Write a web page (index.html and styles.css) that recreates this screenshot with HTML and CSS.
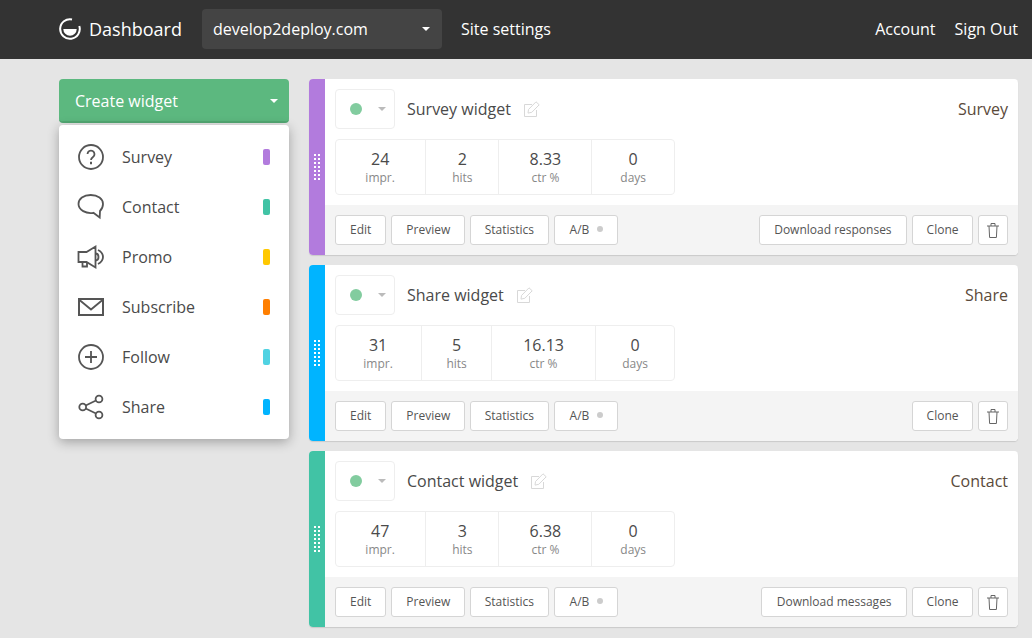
FILE: index.html
```html
<!DOCTYPE html>
<html lang="en">
<head>
    <meta charset="UTF-8">
    <title>Dashboard</title>
    <link rel="stylesheet" href="styles.css">
</head>
<body>
    <header class="topbar">
        <div class="brand">
            <svg class="logo" width="22" height="22" viewBox="0 0 22 22">
                <path d="M20.300 8A9.800 9.800 0 1 1 13 1.400" fill="none" stroke="#fff" stroke-width="2"/>
                <path d="M4.300 11h13.400a6.700 6.700 0 0 1-13.400 0z" fill="#fff"/>
            </svg>
            <span>Dashboard</span>
        </div>
        <div class="site-select">
            <span>develop2deploy.com</span>
            <i class="caret"></i>
        </div>
        <a class="nav-link">Site settings</a>
        <nav class="user-nav">
            <a class="nav-link">Account</a>
            <a class="nav-link">Sign Out</a>
        </nav>
    </header>

    <main class="page">
        <aside class="sidebar">
            <button class="create-btn">Create widget <i class="caret"></i></button>
            <ul class="type-menu">
                <li>
                    <svg class="type-icon" width="28" height="28" viewBox="0 0 28 28" fill="none" stroke="#555" stroke-width="1.800">
                        <circle cx="14" cy="14" r="12"/>
                        <path d="M10.500 11a3.500 3.500 0 1 1 5.500 3c-1.300.9-2 1.500-2 3"/>
                        <path d="M14 18.800v2.400" stroke-width="2"/>
                    </svg>
                    <span>Survey</span><i class="swatch survey"></i>
                </li>
                <li>
                    <svg class="type-icon" width="28" height="28" viewBox="0 0 28 28" fill="none" stroke="#555" stroke-width="1.800">
                        <path d="M13.700 2C20.800 2 26 5.800 26 11c0 3.400-1.800 5.800-3 7l-.3 6.500-6.300-4.700C9 21 1.500 17 1.500 11 1.500 5.800 6.500 2 13.700 2z"/>
                    </svg>
                    <span>Contact</span><i class="swatch contact"></i>
                </li>
                <li>
                    <svg class="type-icon" width="28" height="28" viewBox="0 0 28 28" fill="none" stroke="#555" stroke-width="1.800">
                        <path d="M1.500 9h8L18.500 3.500v21L9.500 19h-8z"/>
                        <path d="M5.500 19v4.500h4.500V20"/>
                        <path d="M18.500 10.500c2 0 3 1.500 3 3.500s-1 3.500-3 3.500"/>
                        <path d="M21 7c3 1.500 5 3.500 5 7s-2 5.500-5 7"/>
                    </svg>
                    <span>Promo</span><i class="swatch promo"></i>
                </li>
                <li>
                    <svg class="type-icon" width="28" height="28" viewBox="0 0 28 28" fill="none" stroke="#555" stroke-width="1.800">
                        <rect x="2" y="6" width="24" height="16" stroke-width="2"/>
                        <path d="M2.500 7L14 16.500 25.500 7"/>
                    </svg>
                    <span>Subscribe</span><i class="swatch subscribe"></i>
                </li>
                <li>
                    <svg class="type-icon" width="28" height="28" viewBox="0 0 28 28" fill="none" stroke="#555" stroke-width="1.800">
                        <circle cx="14" cy="14" r="12"/>
                        <path d="M14 8v12M8 14h12"/>
                    </svg>
                    <span>Follow</span><i class="swatch follow"></i>
                </li>
                <li>
                    <svg class="type-icon" width="28" height="28" viewBox="0 0 28 28" fill="none" stroke="#555" stroke-width="1.800">
                        <circle cx="22" cy="6" r="3.400"/>
                        <circle cx="5.700" cy="14" r="3.400"/>
                        <circle cx="22" cy="22" r="3.400"/>
                        <path d="M8.700 12.500L19 7.500M8.700 15.500L19 20.500"/>
                    </svg>
                    <span>Share</span><i class="swatch share"></i>
                </li>
            </ul>
        </aside>

        <section class="widgets">
            <article class="widget">
                <div class="handle survey"><i class="grip"></i></div>
                <div class="widget-main">
                    <div class="widget-body">
                        <div class="widget-head">
                            <div class="status-btn"><i class="dot"></i><i class="caret grey"></i></div>
                            <h2>Survey widget</h2>
                            <svg class="pencil" width="16" height="16" viewBox="0 0 16 16" fill="none" stroke="#d8d8d8">
                                <path d="M12.500 9v6.500H.5v-12H8"/>
                                <path d="M4.500 8.500L12 .8l3.200 3L7.800 11.300l-3.800.8z"/>
                            </svg>
                            <span class="widget-type">Survey</span>
                        </div>
                        <table class="stats">
                            <tr><td><b>24</b>impr.</td><td><b>2</b>hits</td><td><b>8.33</b>ctr %</td><td><b>0</b>days</td></tr>
                        </table>
                    </div>
                    <div class="widget-foot">
                        <a class="btn">Edit</a>
                        <a class="btn">Preview</a>
                        <a class="btn tight">Statistics</a>
                        <a class="btn ab">A/B <i class="ab-dot"></i></a>
                        <a class="btn wide push">Download responses</a>
                        <a class="btn tight">Clone</a>
                        <a class="btn trash">
                            <svg width="12" height="15" viewBox="0 0 12 15" fill="none" stroke="#666">
                                <path d="M0 3h12M4 3V.5h4V3M2 3l.6 11.500h6.800L10 3"/>
                            </svg>
                        </a>
                    </div>
                </div>
            </article>

            <article class="widget">
                <div class="handle share"><i class="grip"></i></div>
                <div class="widget-main">
                    <div class="widget-body">
                        <div class="widget-head">
                            <div class="status-btn"><i class="dot"></i><i class="caret grey"></i></div>
                            <h2>Share widget</h2>
                            <svg class="pencil" width="16" height="16" viewBox="0 0 16 16" fill="none" stroke="#d8d8d8">
                                <path d="M12.500 9v6.500H.5v-12H8"/>
                                <path d="M4.500 8.500L12 .8l3.200 3L7.800 11.300l-3.800.8z"/>
                            </svg>
                            <span class="widget-type">Share</span>
                        </div>
                        <table class="stats">
                            <tr><td><b>31</b>impr.</td><td><b>5</b>hits</td><td><b>16.13</b>ctr %</td><td><b>0</b>days</td></tr>
                        </table>
                    </div>
                    <div class="widget-foot">
                        <a class="btn">Edit</a>
                        <a class="btn">Preview</a>
                        <a class="btn tight">Statistics</a>
                        <a class="btn ab">A/B <i class="ab-dot"></i></a>
                        <a class="btn tight push">Clone</a>
                        <a class="btn trash">
                            <svg width="12" height="15" viewBox="0 0 12 15" fill="none" stroke="#666">
                                <path d="M0 3h12M4 3V.5h4V3M2 3l.6 11.500h6.800L10 3"/>
                            </svg>
                        </a>
                    </div>
                </div>
            </article>

            <article class="widget">
                <div class="handle contact"><i class="grip"></i></div>
                <div class="widget-main">
                    <div class="widget-body">
                        <div class="widget-head">
                            <div class="status-btn"><i class="dot"></i><i class="caret grey"></i></div>
                            <h2>Contact widget</h2>
                            <svg class="pencil" width="16" height="16" viewBox="0 0 16 16" fill="none" stroke="#d8d8d8">
                                <path d="M12.500 9v6.500H.5v-12H8"/>
                                <path d="M4.500 8.500L12 .8l3.200 3L7.800 11.300l-3.800.8z"/>
                            </svg>
                            <span class="widget-type">Contact</span>
                        </div>
                        <table class="stats">
                            <tr><td><b>47</b>impr.</td><td><b>3</b>hits</td><td><b>6.38</b>ctr %</td><td><b>0</b>days</td></tr>
                        </table>
                    </div>
                    <div class="widget-foot">
                        <a class="btn">Edit</a>
                        <a class="btn">Preview</a>
                        <a class="btn tight">Statistics</a>
                        <a class="btn ab">A/B <i class="ab-dot"></i></a>
                        <a class="btn wide push">Download messages</a>
                        <a class="btn tight">Clone</a>
                        <a class="btn trash">
                            <svg width="12" height="15" viewBox="0 0 12 15" fill="none" stroke="#666">
                                <path d="M0 3h12M4 3V.5h4V3M2 3l.6 11.500h6.800L10 3"/>
                            </svg>
                        </a>
                    </div>
                </div>
            </article>
        </section>
    </main>
</body>
</html>
```

FILE: styles.css
```css
html, body {
    height: 100%;
}

body {
    margin: 0;
    font-family: "Open Sans", sans-serif;
    background-color: #e5e5e5;
    color: #444;
    overflow: hidden;
}

.topbar {
    display: flex;
    align-items: center;
    height: 59px;
    padding: 0 14px 2px 59px;
    background-color: #333;
    color: #fff;
    box-sizing: border-box;
}

.brand {
    display: flex;
    align-items: center;
    gap: 8px;
    width: 143px;
    font-size: 18px;
}

.site-select {
    display: flex;
    align-items: center;
    justify-content: space-between;
    width: 240px;
    height: 40px;
    margin-right: 19px;
    padding: 0 12px 0 11px;
    box-sizing: border-box;
    background-color: #444;
    border-radius: 4px;
    font-size: 16px;
}

.nav-link {
    font-size: 16px;
    color: #fff;
}

.user-nav {
    display: flex;
    gap: 19px;
    margin-left: auto;
}

.caret {
    display: inline-block;
    width: 0;
    height: 0;
    border-left: 4px solid transparent;
    border-right: 4px solid transparent;
    border-top: 4px solid #fff;
}

.caret.grey {
    border-top-color: #bbb;
}

.page {
    display: flex;
    gap: 20px;
    padding: 20px 14px 0 59px;
}

.sidebar {
    width: 230px;
    flex-shrink: 0;
}

.create-btn {
    display: flex;
    align-items: center;
    justify-content: space-between;
    width: 100%;
    height: 44px;
    padding: 2px 11px 0 16px;
    border: none;
    border-bottom: 2px solid #52a873;
    border-radius: 4px;
    background-color: #5cb87f;
    color: #fff;
    font-family: inherit;
    font-size: 16px;
}

.type-menu {
    list-style: none;
    margin: 2px 0 0;
    padding: 7px 19px 7px 18px;
    background-color: #fff;
    border-radius: 4px;
    box-shadow: 0 3px 12px rgba(0, 0, 0, 0.3);
}

.type-menu li {
    display: flex;
    align-items: center;
    height: 50px;
    font-size: 16px;
    color: #4a4a4a;
}

.type-icon {
    flex-shrink: 0;
    margin-right: 17px;
}

.swatch {
    width: 7px;
    height: 16px;
    margin-left: auto;
    border-radius: 2px;
}

.survey { background-color: #b27bdd; }
.contact { background-color: #41c3a5; }
.promo { background-color: #ffc800; }
.subscribe { background-color: #ff7f00; }
.follow { background-color: #50d2e2; }
.share { background-color: #00b4ff; }

.widgets {
    flex: 1;
    display: flex;
    flex-direction: column;
    gap: 10px;
}

.widget {
    display: flex;
    height: 176px;
    background-color: #fff;
    border-radius: 4px;
    overflow: hidden;
    box-shadow: 0 1px 1px rgba(0, 0, 0, 0.12);
}

.handle {
    display: flex;
    align-items: center;
    justify-content: center;
    width: 16px;
    flex-shrink: 0;
}

.grip {
    width: 6px;
    height: 26px;
    background-image: conic-gradient(#fff 25%, transparent 0);
    background-size: 4px 4px;
    background-position: -2px 0;
}

.widget-main {
    flex: 1;
    display: flex;
    flex-direction: column;
}

.widget-body {
    flex: 1;
    padding: 10px 10px 0;
}

.widget-head {
    display: flex;
    align-items: center;
    height: 40px;
    margin-bottom: 10px;
}

.status-btn {
    display: flex;
    align-items: center;
    justify-content: space-between;
    width: 60px;
    height: 40px;
    padding: 0 8px 0 14px;
    margin-right: 12px;
    box-sizing: border-box;
    border: 1px solid #eee;
    border-radius: 4px;
}

.dot {
    width: 12px;
    height: 12px;
    border-radius: 50%;
    background-color: #82cc9f;
}

.widget-head h2 {
    margin: 0 13px 0 0;
    font-size: 16px;
    font-weight: 400;
    color: #4a4a4a;
}

.widget-type {
    margin-left: auto;
    font-size: 16px;
    color: #5a4a3a;
}

.stats {
    width: 340px;
    height: 56px;
    border-collapse: separate;
    border-spacing: 0;
    border: 1px solid #eee;
    border-radius: 4px;
    text-align: center;
    font-size: 12px;
    color: #888;
}

.stats td {
    padding: 0 10px;
    border-left: 1px solid #eee;
}

.stats td:first-child {
    padding-right: 11px;
    border-left: none;
}

.stats b {
    display: block;
    font-size: 16px;
    font-weight: 400;
    line-height: 20px;
    color: #4a4a4a;
}

.widget-foot {
    display: flex;
    gap: 5px;
    height: 50px;
    padding: 10px;
    box-sizing: border-box;
    background-color: #f4f4f4;
}

.btn {
    display: flex;
    align-items: center;
    gap: 6px;
    height: 30px;
    padding: 0 14px 2px;
    box-sizing: border-box;
    background-color: #fff;
    border: 1px solid #d5d5d5;
    border-radius: 3px;
    font-size: 12px;
    color: #555;
}

.btn.tight {
    padding: 0 13.5px 2px;
}

.btn.wide {
    padding: 0 14.5px 2px;
}

.btn.ab {
    gap: 8px;
    padding-left: 15px;
    padding-right: 14px;
}

.btn.push {
    margin-left: auto;
}

.btn.trash {
    padding: 0 8px;
}

.ab-dot {
    width: 6px;
    height: 6px;
    border-radius: 50%;
    background-color: #ccc;
}
```
